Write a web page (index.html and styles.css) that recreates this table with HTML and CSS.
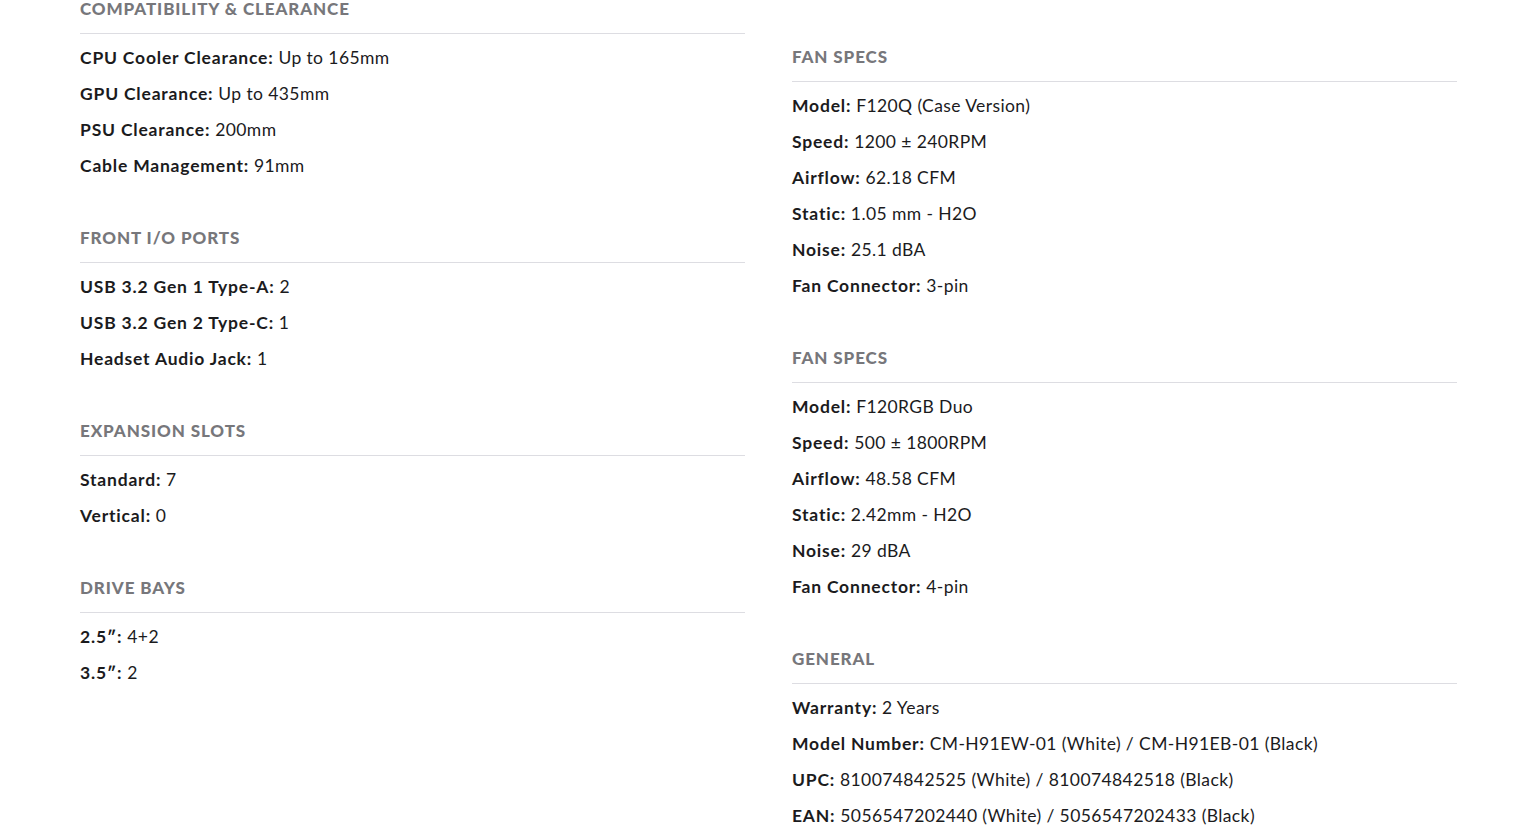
FILE: index.html
```html
<!DOCTYPE html>
<html>
<head>
<meta charset="utf-8">
<link rel="stylesheet" href="styles.css">
</head>
<body>
<div class="specs">
  <div class="col">
    <section class="group">
      <h3 class="title">Compatibility &amp; Clearance</h3>
      <p class="row"><b>CPU Cooler Clearance:</b> Up to 165mm</p>
      <p class="row"><b>GPU Clearance:</b> Up to 435mm</p>
      <p class="row"><b>PSU Clearance:</b> 200mm</p>
      <p class="row"><b>Cable Management:</b> 91mm</p>
    </section>
    <section class="group">
      <h3 class="title">Front I/O Ports</h3>
      <p class="row"><b>USB 3.2 Gen 1 Type-A:</b> 2</p>
      <p class="row"><b>USB 3.2 Gen 2 Type-C:</b> 1</p>
      <p class="row"><b>Headset Audio Jack:</b> 1</p>
    </section>
    <section class="group">
      <h3 class="title">Expansion Slots</h3>
      <p class="row"><b>Standard:</b> 7</p>
      <p class="row"><b>Vertical:</b> 0</p>
    </section>
    <section class="group">
      <h3 class="title">Drive Bays</h3>
      <p class="row"><b>2.5″:</b> 4+2</p>
      <p class="row"><b>3.5″:</b> 2</p>
    </section>
  </div>
  <div class="col col-right">
    <section class="group">
      <h3 class="title">Fan Specs</h3>
      <p class="row"><b>Model:</b> F120Q (Case Version)</p>
      <p class="row"><b>Speed:</b> 1200 ± 240RPM</p>
      <p class="row"><b>Airflow:</b> 62.18 CFM</p>
      <p class="row"><b>Static:</b> 1.05 mm - H2O</p>
      <p class="row"><b>Noise:</b> 25.1 dBA</p>
      <p class="row"><b>Fan Connector:</b> 3-pin</p>
    </section>
    <section class="group">
      <h3 class="title">Fan Specs</h3>
      <p class="row"><b>Model:</b> F120RGB Duo</p>
      <p class="row"><b>Speed:</b> 500 ± 1800RPM</p>
      <p class="row"><b>Airflow:</b> 48.58 CFM</p>
      <p class="row"><b>Static:</b> 2.42mm - H2O</p>
      <p class="row"><b>Noise:</b> 29 dBA</p>
      <p class="row"><b>Fan Connector:</b> 4-pin</p>
    </section>
    <section class="group">
      <h3 class="title">General</h3>
      <p class="row"><b>Warranty:</b> 2 Years</p>
      <p class="row"><b>Model Number:</b> CM-H91EW-01 (White) / CM-H91EB-01 (Black)</p>
      <p class="row"><b>UPC:</b> 810074842525 (White) / 810074842518 (Black)</p>
      <p class="row"><b>EAN:</b> 5056547202440 (White) / 5056547202433 (Black)</p>
    </section>
  </div>
</div>
</body>
</html>
```
FILE: styles.css
```css
html, body {
  margin: 0;
  padding: 0;
  background: #ffffff;
}
body {
  font-family: Lato, "Liberation Sans", sans-serif;
  color: #1b1b1d;
  overflow: hidden;
  height: 840px;
}
.specs {
  display: grid;
  grid-template-columns: 665px 665px;
  column-gap: 47px;
  padding-left: 80px;
}
.col-right {
  padding-top: 48px;
}
.group {
  margin-bottom: 45px;
}
.title {
  margin: 0;
  font-size: 17px;
  line-height: 18px;
  font-weight: 900;
  text-transform: uppercase;
  letter-spacing: 0.9px;
  color: #77777b;
  padding-bottom: 15px;
  border-bottom: 1px solid #dddde2;
  margin-bottom: 6px;
}
.row {
  margin: 0;
  font-size: 17.5px;
  line-height: 36px;
  letter-spacing: 0.4px;
  font-weight: 400;
  white-space: nowrap;
}
.row b {
  font-weight: 700;
  letter-spacing: 0.8px;
}
```
